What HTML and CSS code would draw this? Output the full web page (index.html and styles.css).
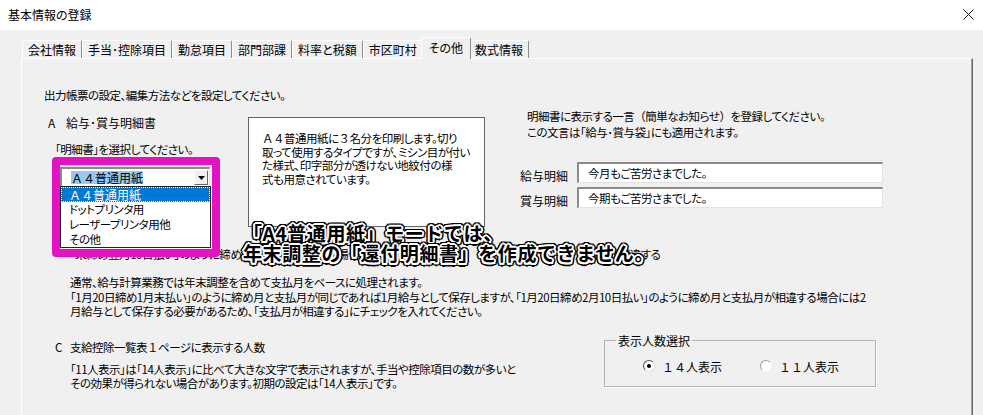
FILE: index.html
```html
<!DOCTYPE html>
<html lang="ja">
<head>
	<meta charset="UTF-8">
	<title>基本情報の登録</title>
	<link rel="stylesheet" href="styles.css">
</head>
<body>
	<div class="titlebar">
		<span class="title">基本情報の登録</span>
		<svg class="close" width="11" height="11" viewBox="0 0 11 11"><path d="M0.5 0.5L10.5 10.5M10.5 0.5L0.5 10.5" stroke="#111" stroke-width="1"/></svg>
	</div>

	<div class="main">
		<div class="tabs">
			<span class="tab">会社情報</span>
			<span class="tab">手当･控除項目</span>
			<span class="tab">勤怠項目</span>
			<span class="tab">部門部課</span>
			<span class="tab">料率と税額</span>
			<span class="tab">市区町村</span>
			<span class="tab active">その他</span>
			<span class="tab">数式情報</span>
		</div>

		<div class="panel">
			<p class="intro">出力帳票の設定、編集方法などを設定してください。</p>

			<!-- A 給与・賞与明細書 -->
			<div class="row-a">
				<div class="col-left">
					<div class="head"><span class="mark">A</span>給与･賞与明細書</div>
					<div class="pick">「明細書」を選択してください。</div>
					<div class="combo">
						<span class="sel fw">Ａ４普通用紙</span>
						<span class="combo-btn">
							<svg width="7" height="4" viewBox="0 0 7 4"><path d="M0 0H7L3.5 4Z" fill="#000"/></svg>
						</span>
						<ul class="combo-list">
							<li class="on fw">Ａ４普通用紙</li>
							<li>ドットプリンタ用</li>
							<li>レーザープリンタ用他</li>
							<li>その他</li>
						</ul>
						<div class="mark-frame"></div>
					</div>
				</div>

				<div class="note">
					<span class="fw">Ａ４</span>普通用紙に<span class="fw">３</span>名分を印刷します。切り<br>
					取って使用するタイプですが、ミシン目が付い<br>
					た様式、印字部分が透けない地紋付の様<br>
					式も用意されています。
				</div>

				<div class="col-right">
					<div class="msg">
						明細書に表示する一言<span class="fw">（</span>簡単なお知らせ<span class="fw">）</span>を登録してください。<br>
						この文言は「給与･賞与袋」にも適用されます。
					</div>
					<div class="field-row">
						<label>給与明細</label>
						<div class="textbox">今月もご苦労さまでした。</div>
					</div>
					<div class="field-row">
						<label>賞与明細</label>
						<div class="textbox">今期もご苦労さまでした。</div>
					</div>
				</div>
			</div>

			<!-- B 保存月 -->
			<div class="row-b">
				<span class="b-text">「末締め翌月10日払い」のように締め月と支払月が異なる場合の処理</span>
				<span class="check"></span>
				<span>支払月が相違する</span>
			</div>

			<p class="para">
				通常、給与計算業務では年末調整を含めて支払月をベースに処理されます。<br>
				「1月20日締め1月末払い」のように締め月と支払月が同じであれば1月給与として保存しますが、「1月20日締め2月10日払い」のように締め月と支払月が相違する場合には2<br>
				月給与として保存する必要があるため、「支払月が相違する」にチェックを入れてください。
			</p>

			<!-- C 支給控除一覧表 -->
			<div class="row-c">
				<div class="c-left">
					<div class="head c-head"><span class="mark-c">C</span>支給控除一覧表<span class="fw">１</span>ページに表示する人数</div>
					<p class="c-desc">
						「11人表示」は「14人表示」に比べて大きな文字で表示されますが、手当や控除項目の数が多いと<br>
						その効果が得られない場合があります。初期の設定は「14人表示」です。
					</p>
				</div>
				<fieldset class="group">
					<legend>表示人数選択</legend>
					<div class="radios">
						<span class="radio checked"></span><span class="fw">１４</span>人表示
						<span class="radio second"></span><span class="fw">１１</span>人表示
					</div>
				</fieldset>
			</div>
		</div>
	</div>

	<div class="callout"><span class="fw">「</span>A4普通用紙」モードでは、<br>年末調整の「還付明細書」を作成できません。</div>
</body>
</html>
```

FILE: styles.css
```css
body{
	margin: 0;
	height: 415px;
	overflow: hidden;
	background-color: #F0F0F0;
	font-family: "Noto Sans CJK JP", "Noto Sans", sans-serif;
	font-size: 12px;
	color: #000;
	font-feature-settings: "palt";
}

.fw{
	font-feature-settings: normal;
}

/* かな混じりの文章は少し詰める */
.intro, .pick, .note, .msg, .row-b, .para, .c-head, .c-desc, .combo-list li, .textbox{
	font-size: 11.5px;
	letter-spacing: -0.5px;
}

.titlebar{
	height: 30px;
	box-sizing: border-box;
	padding: 0 9px 2px 8px;
	background-color: #fff;
	display: flex;
	align-items: center;
	justify-content: space-between;
}

.main{
	padding: 7px 10px 0 21px;
}

/* tabs */
.tabs{
	display: flex;
	align-items: flex-end;
	height: 21px;
	padding-left: 1px;
}

.tab{
	height: 18px;
	line-height: 17px;
	padding: 0 5px;
	box-sizing: border-box;
	border: 1px solid;
	border-color: #fff #8c8c8c transparent #fff;
	border-bottom: none;
	border-radius: 2px 2px 0 0;
	white-space: nowrap;
}

.tab.active{
	height: 22px;
	line-height: 19px;
	margin: 0 -2px -1px;
	padding: 0 7px;
	position: relative;
	z-index: 1;
	background-color: #F0F0F0;
}

.panel{
	height: 327px;
	padding-top: 29px;
	border: 1px solid;
	border-color: #fff #696969 #696969 #fff;
	border-bottom: none;
	box-shadow: inset -1px 0 #a0a0a0;
}

.intro{
	margin: 0;
	padding-left: 22px;
	line-height: 15px;
}

/* section A */
.row-a{
	display: flex;
	align-items: flex-start;
	margin-top: 5px;
	padding-left: 26px;
}

.col-left{
	width: 200px;
	padding-top: 7px;
}

.head{
	line-height: 15px;
	white-space: nowrap;
}

.mark{
	display: inline-block;
	width: 18px;
}

.pick{
	margin: 12px 0 0 7px;
	line-height: 15px;
}

.combo{
	position: relative;
	margin: 10px 0 0 12px;
	width: 150px;
	height: 20px;
	box-sizing: border-box;
	background-color: #fff;
	border-style: solid;
	border-width: 2px 1px 1px 2px;
	border-color: #8a8a8a #e3e3e3 #e3e3e3 #8a8a8a;
	display: flex;
	align-items: center;
}

.sel{
	margin-left: 9px;
	line-height: 13px;
	background-color: #99c9ef;
}

.combo-btn{
	margin-left: auto;
	margin-right: 1px;
	width: 14px;
	height: 15px;
	box-sizing: border-box;
	border: 1px solid;
	border-color: #fff #696969 #696969 #fff;
	background-color: #F0F0F0;
	display: flex;
	align-items: center;
	justify-content: center;
}

.combo-list{
	position: absolute;
	top: 17px;
	left: -2px;
	width: 151px;
	margin: 0;
	padding: 0;
	list-style: none;
	box-sizing: border-box;
	background-color: #fff;
	border: 1px solid #222;
	z-index: 2;
}

.combo-list li{
	height: 15px;
	line-height: 15px;
	padding-left: 8px;
	white-space: nowrap;
}

.combo-list li.on{
	font-size: 12px;
	letter-spacing: 0;
	background-color: #0078d7;
	color: #fff;
	outline: 1px dotted #fff;
	outline-offset: -1px;
}

.mark-frame{
	position: absolute;
	left: -10px;
	top: -12px;
	width: 168px;
	height: 100px;
	box-sizing: border-box;
	border: 8px solid #e312c3;
	border-radius: 4px;
	z-index: 3;
}

.note{
	width: 237px;
	height: 110px;
	margin-top: 9px;
	box-sizing: border-box;
	padding: 14px 0 0 13px;
	background-color: #fff;
	border: 1px solid #646464;
	line-height: 13.5px;
	white-space: nowrap;
}

.col-right{
	margin-left: 35px;
}

.msg{
	padding-left: 7px;
	line-height: 16px;
	white-space: nowrap;
}

.field-row{
	display: flex;
	align-items: flex-start;
	margin-top: 4px;
}

.msg + .field-row{
	margin-top: 22px;
}

.field-row label{
	width: 57px;
	margin-top: 6px;
	line-height: 15px;
}

.textbox{
	width: 306px;
	height: 21px;
	box-sizing: border-box;
	padding-left: 9px;
	line-height: 18px;
	background-color: #fff;
	border-style: solid;
	border-width: 2px 1px 1px 2px;
	border-color: #8a8a8a #e3e3e3 #e3e3e3 #8a8a8a;
}

/* section B */
.row-b{
	display: flex;
	align-items: center;
	margin-top: 20px;
	padding-left: 48px;
	line-height: 15px;
	white-space: nowrap;
}

.b-text{
	width: 487px;
}

.check{
	width: 13px;
	height: 13px;
	margin-right: 5px;
	box-sizing: border-box;
	background-color: #fff;
	border: 1px solid #333;
}

.para{
	margin: 13px 0 0;
	padding-left: 48px;
	line-height: 14.5px;
	white-space: nowrap;
}

/* section C */
.row-c{
	display: flex;
	align-items: flex-start;
	margin-top: 21px;
	padding-left: 33px;
}

.c-left{
	width: 549px;
}

.mark-c{
	display: inline-block;
	width: 15px;
}

.c-desc{
	margin: 7px 0 0;
	padding-left: 15px;
	line-height: 14.5px;
	white-space: nowrap;
}

.group{
	width: 272px;
	margin: -7px 0 0;
	padding: 0 0 12px;
	box-sizing: border-box;
	border: 1px solid #b4b4b4;
	box-shadow: 1px 1px 0 #fff;
}

.group legend{
	margin-left: 11px;
	padding: 0 2px;
	line-height: 15px;
}

.radios{
	display: flex;
	align-items: center;
	margin-top: 11px;
	padding-left: 38px;
	line-height: 15px;
	white-space: nowrap;
}

.radio{
	width: 12px;
	height: 12px;
	margin-right: 7px;
	box-sizing: border-box;
	border-radius: 50%;
	background-color: #fff;
	border: 1px solid;
	border-color: #555 #e0e0e0 #e0e0e0 #555;
	position: relative;
}

.radio.checked::after{
	content: "";
	position: absolute;
	left: 3px;
	top: 3px;
	width: 4px;
	height: 4px;
	border-radius: 50%;
	background-color: #000;
}

.radio.second{
	margin-left: 38px;
	border-color: #a0a0a0 #f4f4f4 #f4f4f4 #a0a0a0;
}

/* 注釈テキスト */
.callout{
	position: absolute;
	left: 243px;
	top: 223px;
	z-index: 5;
	font-size: 19px;
	font-weight: 700;
	line-height: 20px;
	letter-spacing: 0.6px;
	white-space: nowrap;
	color: #000;
	font-feature-settings: normal;
	text-shadow:
		2px 0 #fff, -2px 0 #fff, 0 2px #fff, 0 -2px #fff,
		1.5px 1.5px #fff, -1.5px 1.5px #fff, 1.5px -1.5px #fff, -1.5px -1.5px #fff,
		1px 0 #fff, -1px 0 #fff, 0 1px #fff, 0 -1px #fff,
		3.5px 0 #000, -3.5px 0 #000, 0 3.5px #000, 0 -3.5px #000,
		2.5px 2.5px #000, -2.5px 2.5px #000, 2.5px -2.5px #000, -2.5px -2.5px #000,
		3px 1.5px #000, -3px 1.5px #000, 3px -1.5px #000, -3px -1.5px #000,
		1.5px 3px #000, -1.5px 3px #000, 1.5px -3px #000, -1.5px -3px #000;
}
```
